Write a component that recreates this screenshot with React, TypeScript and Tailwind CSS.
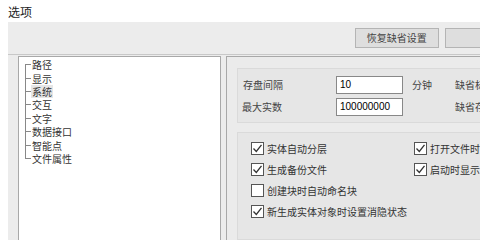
import React from 'react';

const treeItems = ['路径', '显示', '系统', '交互', '文字', '数据接口', '智能点', '文件属性'];

function CheckBox({ checked, label }: { checked: boolean; label: string }) {
  return (
    <div className="flex items-center gap-[3px] whitespace-nowrap h-[14px]">
      <span className="w-[13px] h-[13px] border border-[#555] bg-white flex items-center justify-center shrink-0">
        {checked && (
          <svg width="11" height="11" viewBox="0 0 11 11">
            <path d="M1.5 5.5 L4.3 8.5 L9.5 1.8" fill="none" stroke="#333" strokeWidth="1.3" />
          </svg>
        )}
      </span>
      <span className="text-[10px] leading-[13px] text-[#333]">{label}</span>
    </div>
  );
}

export default function App() {
  return (
    <div
      className="w-[480px] h-[247px] bg-white overflow-hidden relative"
      style={{ fontFamily: '"Noto Sans CJK SC", "Liberation Sans", sans-serif' }}
    >
      <div className="pl-[8px] pt-[4px] h-[22px] text-[12px] leading-[16px] text-[#222]">选项</div>

      <div className="ml-[8px] w-[520px] h-[218px] bg-[#ececec] flex flex-col">
        {/* buttons */}
        <div className="h-[33px] flex items-start pt-[6px] pl-[347px] gap-[6px] border-b border-[#c8c8c8]">
          <button className="w-[102px] h-[20px] bg-[#dedede] border border-[#b4b4b4] text-[10px] text-[#444] leading-none">
            恢复缺省设置
          </button>
          <button className="w-[102px] h-[20px] bg-[#dedede] border border-[#b4b4b4]" />
        </div>

        <div className="flex flex-1 pl-[10px] pt-[1px] gap-[5px]">
          {/* tree */}
          <div className="w-[203px] h-full bg-white border-l border-t border-r border-[#a8a8a8] pt-[1px] pl-[6px]">
            <div className="relative">
              <div className="absolute left-0 top-[6px] h-[94px] border-l border-[#888]" />
              {treeItems.map((t) => (
                <div key={t} className="flex items-center h-[13.4px]">
                  <span className="w-[6px] border-t border-[#888]" />
                  <span
                    className={`text-[10px] leading-[13px] text-[#333] px-[1px] ${t === '系统' ? 'bg-[#e6e6e6]' : ''}`}
                  >
                    {t}
                  </span>
                </div>
              ))}
            </div>
          </div>

          {/* right panel */}
          <div className="flex-1 h-full border-l border-t border-[#a8a8a8] bg-[#ebebeb] pl-[10px] pt-[11px] flex flex-col gap-[9px]">
            <div className="h-[55px] bg-[#e6e6e6] border border-[#dadada] flex flex-col justify-center gap-[4px] pl-[4px]">
              <div className="flex items-center h-[18px]">
                <span className="w-[94px] text-[10px] text-[#444] pl-[1px]">存盘间隔</span>
                <span className="w-[67px] h-[18px] bg-white border border-[#888] text-[10px] leading-[16px] pl-[3px] text-black" style={{ fontFamily: '"Liberation Sans", sans-serif' }}>10</span>
                <span className="ml-[9px] text-[10px] text-[#444] w-[43px]">分钟</span>
                <span className="text-[10px] text-[#444] whitespace-nowrap">缺省标注</span>
              </div>
              <div className="flex items-center h-[18px]">
                <span className="w-[94px] text-[10px] text-[#444]">最大实数</span>
                <span className="w-[67px] h-[18px] bg-white border border-[#888] text-[10px] leading-[16px] pl-[3px] text-black" style={{ fontFamily: '"Liberation Sans", sans-serif' }}>100000000</span>
                <span className="ml-[9px] w-[43px]" />
                <span className="text-[10px] text-[#444] whitespace-nowrap">缺省存储</span>
              </div>
            </div>

            <div className="flex-1 bg-[#e6e6e6] border border-[#dadada] pl-[13px] pt-[8px]">
              <div className="grid grid-cols-[163px_auto] gap-y-[7px] items-center">
                <CheckBox checked label="实体自动分层" />
                <CheckBox checked label="打开文件时显示" />
                <CheckBox checked label="生成备份文件" />
                <CheckBox checked label="启动时显示启动" />
                <CheckBox checked={false} label="创建块时自动命名块" />
                <div />
                <CheckBox checked label="新生成实体对象时设置消隐状态" />
                <div />
              </div>
            </div>
          </div>
        </div>
      </div>
    </div>
  );
}
